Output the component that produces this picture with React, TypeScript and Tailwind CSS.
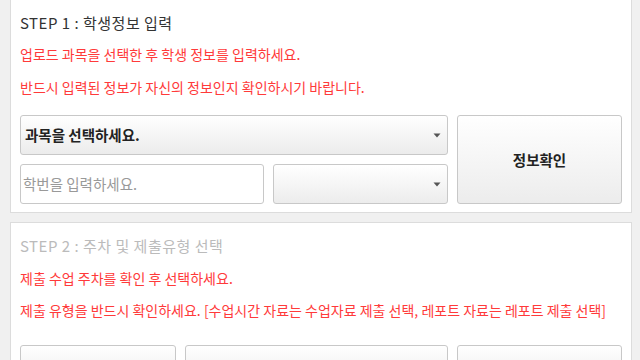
import React from "react";

const font = { fontFamily: '"Noto Sans CJK KR", "Noto Sans", sans-serif' };

function Caret() {
  return (
    <svg width="8" height="5" viewBox="0 0 8 5" className="shrink-0">
      <path d="M0.5 0.5 L7.5 0.5 L4 4.5 Z" fill="#555" />
    </svg>
  );
}

function SelectBox({ label, className }: { label?: string; className: string }) {
  return (
    <div
      className={`flex items-center justify-between rounded-[3px] border border-[#c8c8c8] bg-gradient-to-b from-white to-[#ececec] pl-[4px] pr-[6px] ${className}`}
    >
      <span className="text-[14.5px] font-bold text-[#222] leading-none">{label}</span>
      <Caret />
    </div>
  );
}

export default function App() {
  return (
    <div className="w-[640px] h-[360px] overflow-hidden bg-[#f0f0f0] pl-[10px] pr-[8px]" style={font}>
      <div className="mt-[-1px] flex flex-col border border-[#dcdcdc] bg-white px-[9px] pt-[12px] pb-[8px]">
        <div className="h-[20px] flex items-center text-[15px] tracking-[0.5px] text-[#333] leading-none">STEP 1 : 학생정보 입력</div>
        <div className="mt-[12px] h-[20px] flex items-center text-[14px] text-[#ff3a3a] leading-none">
          업로드 과목을 선택한 후 학생 정보를 입력하세요.
        </div>
        <div className="mt-[13px] h-[20px] flex items-center text-[14px] text-[#ff3a3a] leading-none">
          반드시 입력된 정보가 자신의 정보인지 확인하시기 바랍니다.
        </div>
        <div className="mt-[18px] flex gap-[9px]">
          <div className="flex w-[428px] flex-col gap-[9px]">
            <SelectBox label="과목을 선택하세요." className="h-[40px]" />
            <div className="flex gap-[9px]">
              <div className="flex h-[40px] w-[244px] items-center rounded-[3px] border border-[#c8c8c8] bg-white pl-[2px] text-[14.5px] text-[#999] leading-none">
                학번을 입력하세요.
              </div>
              <SelectBox className="h-[40px] flex-1" />
            </div>
          </div>
          <div className="flex h-[89px] flex-1 items-center justify-center rounded-[3px] border border-[#c8c8c8] bg-gradient-to-b from-white to-[#ececec] text-[14.5px] font-bold text-[#222]">
            정보확인
          </div>
        </div>
      </div>
      <div className="mt-[9px] flex flex-col border border-[#dcdcdc] bg-white px-[9px] pt-[12px]">
        <div className="h-[20px] flex items-center text-[15px] tracking-[0.5px] text-[#bbb] leading-none">STEP 2 : 주차 및 제출유형 선택</div>
        <div className="mt-[13px] h-[20px] flex items-center text-[14px] text-[#ff3a3a] leading-none">
          제출 수업 주차를 확인 후 선택하세요.
        </div>
        <div className="mt-[12px] h-[20px] flex items-center text-[14px] text-[#ff3a3a] leading-none">
          제출 유형을 반드시 확인하세요. [수업시간 자료는 수업자료 제출 선택, 레포트 자료는 레포트 제출 선택]
        </div>
        <div className="mt-[25px] flex gap-[9px]">
          <div className="h-[40px] w-[156px] rounded-[3px] border border-[#c8c8c8] bg-gradient-to-b from-white to-[#ececec]" />
          <div className="h-[40px] w-[263px] rounded-[3px] border border-[#c8c8c8] bg-gradient-to-b from-white to-[#ececec]" />
          <div className="h-[40px] flex-1 rounded-[3px] border border-[#c8c8c8] bg-gradient-to-b from-white to-[#ececec]" />
        </div>
      </div>
    </div>
  );
}
